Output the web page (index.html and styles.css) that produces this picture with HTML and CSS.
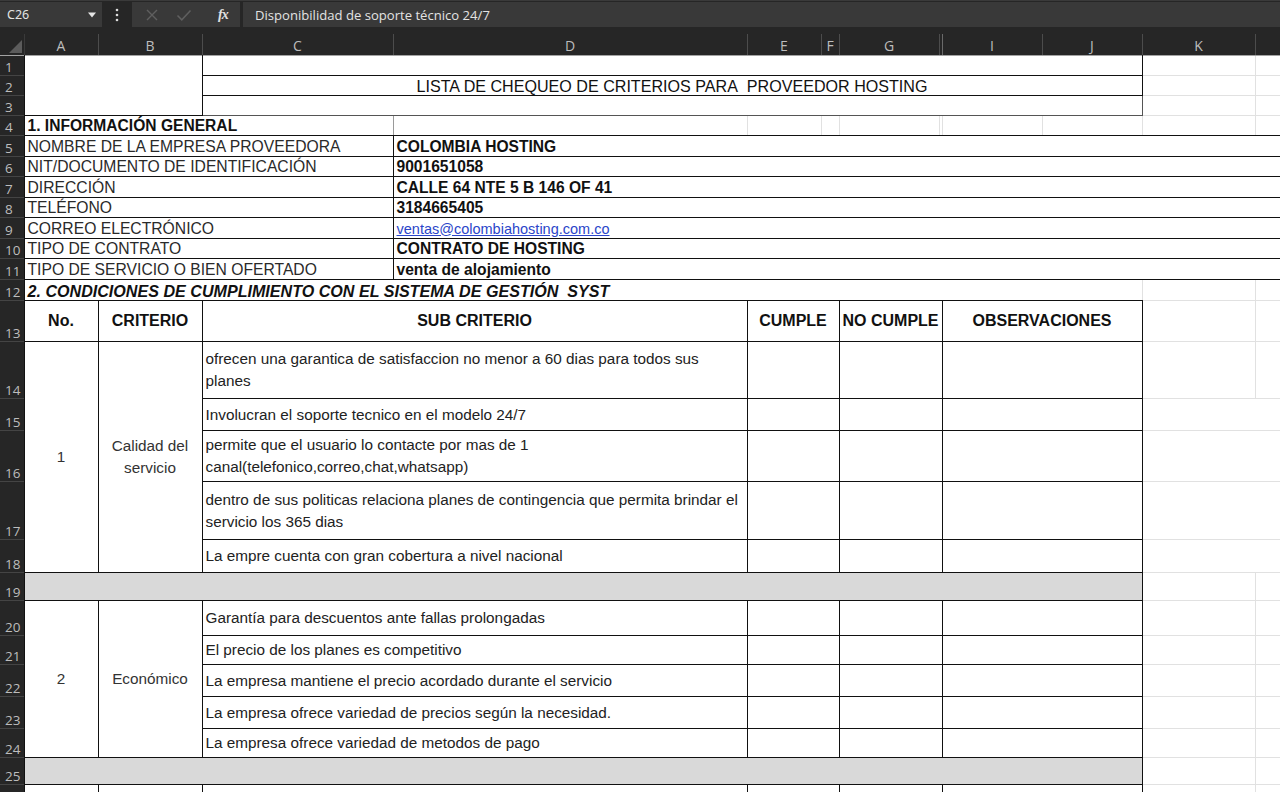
FILE: index.html
```html
<!DOCTYPE html>
<html lang="es">
<head>
<meta charset="utf-8">
<title>Lista de chequeo</title>
<link rel="stylesheet" href="styles.css">
</head>
<body>
<div class="fbar">
  <div class="namebox"><span class="nb-text">C26</span><svg class="caret" width="8" height="6" viewBox="0 0 8 6"><path d="M0 0.5h8L4 5.5z" fill="#e6e6e6"/></svg></div>
  <div class="kebab"><svg width="4" height="14" viewBox="0 0 4 14"><circle cx="2" cy="2" r="1.3" fill="#dcdcdc"/><circle cx="2" cy="7" r="1.3" fill="#dcdcdc"/><circle cx="2" cy="12" r="1.3" fill="#dcdcdc"/></svg></div>
  <div class="fbtns">
    <svg class="ico" width="14" height="14" viewBox="0 0 14 14"><path d="M2 2L12 12M12 2L2 12" stroke="#5f5f5f" stroke-width="1.4" fill="none"/></svg>
    <svg class="ico" width="16" height="14" viewBox="0 0 16 14"><path d="M1.5 7.5L5.8 11.8L14.5 2.5" stroke="#5f5f5f" stroke-width="1.5" fill="none"/></svg>
    <span class="fx">fx</span>
  </div>
  <div class="formula">Disponibilidad de soporte técnico 24/7</div>
</div>
<div class="sheetwrap">
<table class="sheet">
  <colgroup>
    <col class="c-rh"><col class="c-a"><col class="c-b"><col class="c-c"><col class="c-d"><col class="c-e"><col class="c-f"><col class="c-g"><col class="c-h"><col class="c-i"><col class="c-j"><col class="c-k"><col class="c-l">
  </colgroup>
  <tr class="r-hdr">
    <th class="corner"><svg width="13" height="13" viewBox="0 0 13 13"><path d="M13 0V13H0z" fill="#5c5c5c"/></svg></th>
    <th class="ch">A</th><th class="ch">B</th><th class="ch">C</th><th class="ch">D</th><th class="ch">E</th><th class="ch">F</th><th class="ch">G</th><th class="ch ch-h"></th><th class="ch">I</th><th class="ch">J</th><th class="ch">K</th><th class="ch"></th>
  </tr>
  <tr class="r20">
    <th class="rh">1</th>
    <td colspan="2" rowspan="3" class="top0 bl bb br"></td>
    <td colspan="8" class="top0 bb br"></td>
    <td class="top0"></td><td class="top0"></td>
  </tr>
  <tr class="r20">
    <th class="rh">2</th>
    <td colspan="8" class="bb br title">LISTA DE CHEQUEO DE CRITERIOS PARA&nbsp; PROVEEDOR HOSTING</td>
    <td></td><td></td>
  </tr>
  <tr class="r20">
    <th class="rh">3</th>
    <td colspan="8" class="bbg brg"></td>
    <td></td><td></td>
  </tr>
  <tr class="r20">
    <th class="rh">4</th>
    <td colspan="3" class="bl bt bb bold">1. INFORMACIÓN GENERAL</td>
    <td class="bb lg"></td><td class="bb"></td><td class="bb"></td><td class="bb"></td><td class="bb"></td><td class="bb"></td><td class="bb"></td><td class="bb"></td><td class="bb"></td>
  </tr>
  <tr class="r21">
    <th class="rh">5</th>
    <td colspan="3" class="bl bb br lbl">NOMBRE DE LA EMPRESA PROVEEDORA</td>
    <td colspan="9" class="bb bold">COLOMBIA HOSTING</td>
  </tr>
  <tr class="r20">
    <th class="rh">6</th>
    <td colspan="3" class="bl bb br lbl">NIT/DOCUMENTO DE IDENTIFICACIÓN</td>
    <td colspan="9" class="bb bold">9001651058</td>
  </tr>
  <tr class="r21">
    <th class="rh">7</th>
    <td colspan="3" class="bl bb br lbl">DIRECCIÓN</td>
    <td colspan="9" class="bb bold">CALLE 64 NTE 5 B 146 OF 41</td>
  </tr>
  <tr class="r20">
    <th class="rh">8</th>
    <td colspan="3" class="bl bb br lbl">TELÉFONO</td>
    <td colspan="9" class="bb bold">3184665405</td>
  </tr>
  <tr class="r21">
    <th class="rh">9</th>
    <td colspan="3" class="bl bb br lbl">CORREO ELECTRÓNICO</td>
    <td colspan="9" class="bb"><span class="link">ventas@colombiahosting.com.co</span></td>
  </tr>
  <tr class="r20">
    <th class="rh">10</th>
    <td colspan="3" class="bl bb br lbl">TIPO DE CONTRATO</td>
    <td colspan="9" class="bb bold">CONTRATO DE HOSTING</td>
  </tr>
  <tr class="r21">
    <th class="rh">11</th>
    <td colspan="3" class="bl bb br lbl">TIPO DE SERVICIO O BIEN OFERTADO</td>
    <td colspan="9" class="bb bold">venta de alojamiento</td>
  </tr>
  <tr class="r21">
    <th class="rh">12</th>
    <td colspan="10" class="bl bb bolditalic">2. CONDICIONES DE CUMPLIMIENTO CON EL SISTEMA DE GESTIÓN&nbsp; SYST</td>
    <td></td><td></td>
  </tr>
  <tr class="r41">
    <th class="rh">13</th>
    <td class="box hd">No.</td>
    <td class="box hd">CRITERIO</td>
    <td colspan="2" class="box hd">SUB CRITERIO</td>
    <td colspan="2" class="box hd">CUMPLE</td>
    <td colspan="2" class="box hd">NO CUMPLE</td>
    <td colspan="2" class="box hd">OBSERVACIONES</td>
    <td></td><td></td>
  </tr>
  <tr class="r57">
    <th class="rh">14</th>
    <td rowspan="5" class="box ctr">1</td>
    <td rowspan="5" class="box ctr">Calidad del<br>servicio</td>
    <td colspan="2" class="box txt">ofrecen una garantica de satisfaccion no menor a 60 dias para todos sus<br>planes</td>
    <td colspan="2" class="box"></td><td colspan="2" class="box"></td><td colspan="2" class="box"></td>
    <td></td><td></td>
  </tr>
  <tr class="r32">
    <th class="rh">15</th>
    <td colspan="2" class="box txt">Involucran el soporte tecnico en el modelo 24/7</td>
    <td colspan="2" class="box"></td><td colspan="2" class="box"></td><td colspan="2" class="box"></td>
    <td colspan="2"></td>
  </tr>
  <tr class="r51">
    <th class="rh">16</th>
    <td colspan="2" class="box txt">permite que el usuario lo contacte por mas de 1<br>canal(telefonico,correo,chat,whatsapp)</td>
    <td colspan="2" class="box"></td><td colspan="2" class="box"></td><td colspan="2" class="box"></td>
    <td colspan="2"></td>
  </tr>
  <tr class="r58">
    <th class="rh">17</th>
    <td colspan="2" class="box txt">dentro de sus politicas relaciona planes de contingencia que permita brindar el<br>servicio los 365 dias</td>
    <td colspan="2" class="box"></td><td colspan="2" class="box"></td><td colspan="2" class="box"></td>
    <td colspan="2"></td>
  </tr>
  <tr class="r33">
    <th class="rh">18</th>
    <td colspan="2" class="box txt">La empre cuenta con gran cobertura a nivel nacional</td>
    <td colspan="2" class="box"></td><td colspan="2" class="box"></td><td colspan="2" class="box"></td>
    <td colspan="2"></td>
  </tr>
  <tr class="r28">
    <th class="rh">19</th>
    <td colspan="10" class="box fill"></td>
    <td></td><td></td>
  </tr>
  <tr class="r35">
    <th class="rh">20</th>
    <td rowspan="5" class="box ctr">2</td>
    <td rowspan="5" class="box ctr">Económico</td>
    <td colspan="2" class="box txt">Garantía para descuentos ante fallas prolongadas</td>
    <td colspan="2" class="box"></td><td colspan="2" class="box"></td><td colspan="2" class="box"></td>
    <td></td><td></td>
  </tr>
  <tr class="r29">
    <th class="rh">21</th>
    <td colspan="2" class="box txt">El precio de los planes es competitivo</td>
    <td colspan="2" class="box"></td><td colspan="2" class="box"></td><td colspan="2" class="box"></td>
    <td></td><td></td>
  </tr>
  <tr class="r32">
    <th class="rh">22</th>
    <td colspan="2" class="box txt">La empresa mantiene el precio acordado durante el servicio</td>
    <td colspan="2" class="box"></td><td colspan="2" class="box"></td><td colspan="2" class="box"></td>
    <td></td><td></td>
  </tr>
  <tr class="r32">
    <th class="rh">23</th>
    <td colspan="2" class="box txt">La empresa ofrece variedad de precios según la necesidad.</td>
    <td colspan="2" class="box"></td><td colspan="2" class="box"></td><td colspan="2" class="box"></td>
    <td></td><td></td>
  </tr>
  <tr class="r29">
    <th class="rh">24</th>
    <td colspan="2" class="box txt">La empresa ofrece variedad de metodos de pago</td>
    <td colspan="2" class="box"></td><td colspan="2" class="box"></td><td colspan="2" class="box"></td>
    <td></td><td></td>
  </tr>
  <tr class="r27">
    <th class="rh">25</th>
    <td colspan="10" class="box fill"></td>
    <td></td><td></td>
  </tr>
  <tr class="r40">
    <th class="rh"></th>
    <td class="box"></td><td class="box"></td><td colspan="2" class="box"></td><td colspan="2" class="box"></td><td colspan="2" class="box"></td><td colspan="2" class="box"></td>
    <td></td><td></td>
  </tr>
</table>
</div>
</body>
</html>
```
FILE: styles.css
```css
* { box-sizing: border-box; }
html, body { margin: 0; padding: 0; }
body {
  width: 1280px;
  height: 792px;
  overflow: hidden;
  background: #262626;
  font-family: "Liberation Sans", Arial, sans-serif;
}

/* formula bar */
.fbar {
  display: flex;
  align-items: stretch;
  height: 34px;
  padding: 1px 0 7px 0;
  background: #262626;
  border-top: 1px solid #3a3a3a;
}
.namebox {
  width: 102px;
  background: #393939;
  display: flex;
  align-items: center;
  justify-content: space-between;
  padding: 0 6px 0 7px;
  color: #e3e3e3;
  font-family: "Noto Sans", sans-serif;
  font-size: 12.5px;
}
.kebab {
  width: 30px;
  display: flex;
  align-items: center;
  justify-content: center;
}
.fbtns {
  width: 108px;
  background: #393939;
  display: flex;
  align-items: center;
  padding-left: 13px;
  gap: 17px;
}
.fx {
  font-family: "Liberation Serif", serif;
  font-style: italic;
  font-weight: bold;
  font-size: 14px;
  color: #e0e0e0;
  margin-left: 9px;
  letter-spacing: -1px;
}
.formula {
  flex: 1;
  margin-left: 3px;
  background: #393939;
  color: #e3e3e3;
  font-family: "Open Sans", sans-serif;
  font-size: 13.1px;
  display: flex;
  align-items: center;
  padding-left: 12px;
}

/* sheet */
.sheetwrap {
  width: 1280px;
  height: 758px;
  overflow: hidden;
}
.sheet {
  border-collapse: collapse;
  table-layout: fixed;
  width: 1376px;
  background: #fff;
}
.c-rh { width: 24px; }
.c-a { width: 74px; }
.c-b { width: 104px; }
.c-c { width: 191px; }
.c-d { width: 354px; }
.c-e { width: 74px; }
.c-f { width: 18px; }
.c-g { width: 100px; }
.c-h { width: 3px; }
.c-i { width: 100px; }
.c-j { width: 100px; }
.c-k { width: 113px; }
.c-l { width: 121px; }

.r-hdr { height: 21px; }
.r20 { height: 20px; }
.r21 { height: 21px; }
.r27 { height: 27px; }
.r28 { height: 28px; }
.r29 { height: 29px; }
.r32 { height: 32px; }
.r33 { height: 33px; }
.r35 { height: 35px; }
.r40 { height: 40px; }
.r41 { height: 41px; }
.r51 { height: 51px; }
.r57 { height: 57px; }
.r58 { height: 58px; }

.corner, .ch, .rh {
  background: #262626;
  padding: 0;
  font-family: "Open Sans", "Noto Sans", sans-serif;
  font-weight: 400;
  color: #bdbdbd;
}
.corner {
  border-right: 1px solid #3a3a3a;
  border-bottom: 1px solid #a3a3a3;
  text-align: right;
  vertical-align: bottom;
  line-height: 0;
  padding: 0 2px 2px 0;
}
.ch {
  font-size: 14px;
  text-align: center;
  vertical-align: bottom;
  line-height: 19px;
  border-right: 1px solid #4c4c4c;
  border-bottom: 1px solid #a3a3a3;
  overflow: hidden;
}
.ch-h { border-left: 1px solid #6a6a6a; border-right: 1px solid #6a6a6a; }
.rh {
  font-size: 13.5px;
  text-align: left;
  padding-left: 5px;
  vertical-align: bottom;
  line-height: 16px;
  border-bottom: 1px solid #444;
  border-right: 1px solid #555;
}

td {
  border: 1px solid #e1e1e1;
  padding: 0 3px;
  font-size: 15.3px;
  color: #1a1a1a;
  white-space: nowrap;
  overflow: visible;
  vertical-align: bottom;
  line-height: 18px;
}
.top0 { border-top: none; }
.bl { border-left: 1px double #111; }
.br { border-right: 1px double #111; }
.bt { border-top: 1px double #111; }
.bb { border-bottom: 1px double #111; }
.bbg { border-bottom: 1px double #555; }
.brg { border-right: 1px double #555; }
.lg { border-left: 1px double #9a9a9a; }
.box { border: 1px double #111; }

.title { text-align: center; font-size: 16.1px; color: #111; }
.bold { font-weight: bold; font-size: 15.6px; color: #111; }
.bolditalic { font-weight: bold; font-style: italic; font-size: 16.1px; color: #111; }
.lbl { font-size: 15.7px; color: #2a2a2a; }
.link { color: #2a45c9; text-decoration: underline; font-size: 14.5px; }
.hd { text-align: center; font-weight: bold; font-size: 16px; color: #111; vertical-align: middle; }
.ctr { text-align: center; white-space: nowrap; line-height: 22px; color: #333; vertical-align: middle; }
.txt { line-height: 22px; color: #222; vertical-align: middle; padding-top: 1px; }
.fill { background: #d9d9d9; }
```
